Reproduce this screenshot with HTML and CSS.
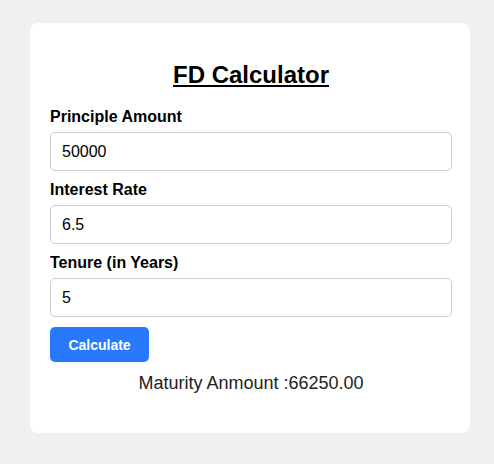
FILE: index.html
```html
<!DOCTYPE html>
<html>
<head>
<meta charset="utf-8">
<link rel="stylesheet" href="styles.css">
</head>
<body>
<div class="card">
  <h2 class="title">FD Calculator</h2>
  <div class="field">
    <label class="label">Principle Amount</label>
    <input class="input" type="text" value="50000">
  </div>
  <div class="field">
    <label class="label">Interest Rate</label>
    <input class="input" type="text" value="6.5">
  </div>
  <div class="field">
    <label class="label">Tenure (in Years)</label>
    <input class="input" type="text" value="5">
  </div>
  <button class="btn">Calculate</button>
  <p class="result">Maturity Anmount :66250.00</p>
</div>
</body>
</html>
```
FILE: styles.css
```css
html, body {
  margin: 0;
  padding: 0;
  background: #f0f0f0;
  font-family: "Liberation Sans", Arial, sans-serif;
}
body {
  padding: 23px 24px 32px 30px;
}
.card {
  width: 402px;
  background: #fff;
  border-radius: 8px;
  padding: 20px 18px 20px 20px;
}
.title {
  margin: 18px 0 19px;
  text-align: center;
  font-size: 24px;
  font-weight: bold;
  text-decoration: underline;
  color: #000;
}
.field {
  display: flex;
  flex-direction: column;
  gap: 6px;
  margin-bottom: 10px;
}
.label {
  font-size: 16px;
  font-weight: bold;
  color: #000;
}
.input {
  box-sizing: border-box;
  width: 402px;
  height: 39px;
  padding: 0 11px;
  border: 1px solid #ccc;
  border-radius: 5px;
  font-family: "Liberation Sans", Arial, sans-serif;
  font-size: 16px;
  color: #000;
  outline: none;
}
.btn {
  display: block;
  box-sizing: border-box;
  width: 99px;
  height: 35px;
  border: none;
  border-radius: 5px;
  background: #2979ff;
  color: #fff;
  font-family: "Liberation Sans", Arial, sans-serif;
  font-size: 14px;
  font-weight: bold;
  padding: 0;
}
.result {
  margin: 11px 0 19px;
  text-align: center;
  font-size: 18px;
  color: #222;
}
```
